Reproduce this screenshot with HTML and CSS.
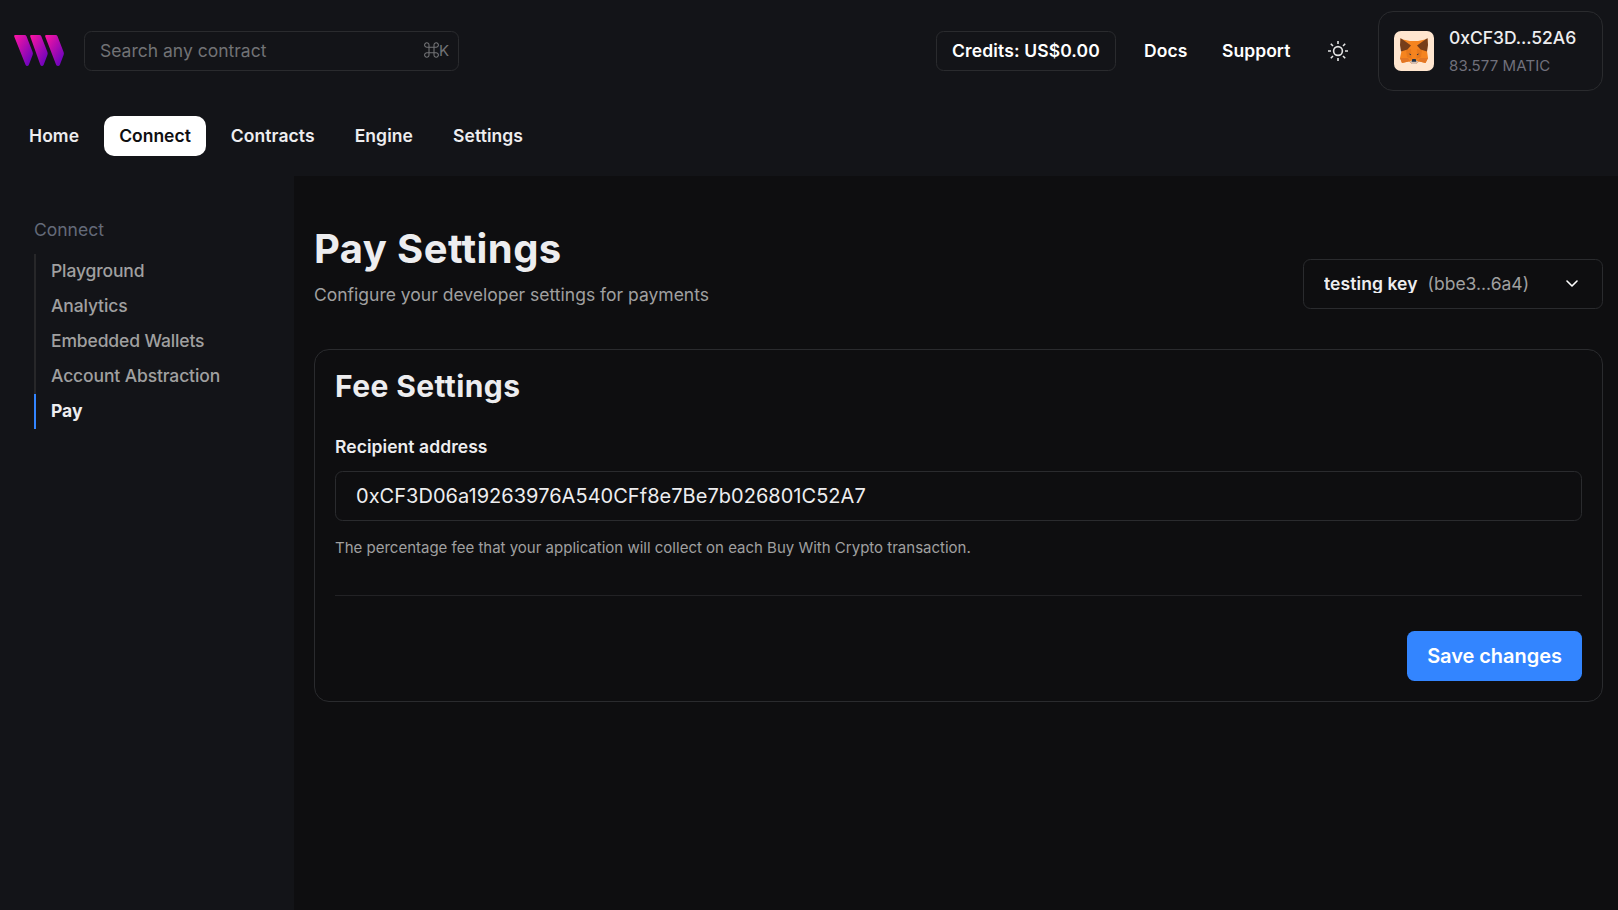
FILE: index.html
```html
<!DOCTYPE html>
<html lang="en">
<head>
<meta charset="utf-8">
<title>Pay Settings</title>
<link rel="stylesheet" href="styles.css">
</head>
<body>
<header class="header">
  <div class="topbar">
    <svg class="logo" width="50" height="31" viewBox="0 0 50 31">
      <defs>
        <linearGradient id="brand" x1="0" y1="0" x2="1" y2="1">
          <stop offset="0.08" stop-color="#f213a4"/><stop offset="0.85" stop-color="#7204bd"/>
        </linearGradient>
      </defs>
      <path fill="url(#brand)" d="M1 0H10.6Q12 0 12.5 1.3L18.6 17.1Q19.2 18.5 18.6 20L14.9 29.8Q14.3 31 13.2 31Q12 31 11.5 29.8L.2 1.6Q-.3 0 1 0Z"/>
      <path fill="url(#brand)" d="M17 0H25.4Q26.8 0 27.3 1.3L33.4 17.1Q34 18.5 33.4 20L29.7 29.8Q29.1 31 28 31Q26.8 31 26.3 29.8L16.2 1.6Q15.7 0 17 0Z"/>
      <path fill="url(#brand)" d="M32 0H41.6Q43 0 43.5 1.3L49.6 17.1Q50.2 18.5 49.6 20L45.9 29.8Q45.3 31 44.2 31Q42.6 31 42.1 29.8L31.2 1.6Q30.7 0 32 0Z"/>
    </svg>
    <div class="search"><span>Search any contract</span><span class="shortcut"><svg width="15" height="16" viewBox="0 0 15 16" fill="none" stroke="currentColor" stroke-width="1.1"><path d="M5 5.2H10V10.8H5ZM5 5.2H3A2.2 2.2 0 1 1 5 3ZM10 5.2V3A2.2 2.2 0 1 1 12 5.2ZM10 10.8H12A2.2 2.2 0 1 1 10 13ZM5 10.8V13A2.2 2.2 0 1 1 3 10.8Z"/></svg>K</span></div>
    <div class="actions">
      <div class="credits">Credits: US$0.00</div>
      <a class="docs">Docs</a>
      <a class="support">Support</a>
      <svg class="sun" width="20" height="20" viewBox="0 0 20 20" fill="none" stroke="#e4e4e4" stroke-width="1.6"><circle cx="10" cy="10" r="4.4"/><path d="M10 0V3M10 17V20M0 10H3M17 10H20M2.8 2.8L5 5M15 15L17.2 17.2M17.2 2.8L15 5M5 15L2.8 17.2"/></svg>
      <div class="account">
        <svg class="avatar" width="40" height="40" viewBox="0 0 40 40">
          <rect width="40" height="40" rx="7" fill="#ffe6cf"/>
          <path fill="#f5841f" d="M6.5 8L16 10H24L33.5 8L33 20L34 27L31.5 32L25 30.5L22 33H18L15 30.5L8 32L6 27L7.5 20Z"/>
          <path fill="#e27625" d="M6 27H14L16 30L8 32ZM34 27H26L24 30L31.5 32Z"/>
          <path fill="#e8791c" d="M12 19L17 18L17.5 28L13 26ZM28 19L23 18L22.5 28L27 26Z"/>
          <path fill="#763e1a" d="M6.5 7L17 14.5L13.5 18.5L7 20.5L6 14ZM33.5 7L23 14.5L26.5 18.5L33 20.5L34 14Z"/>
          <path fill="#d5bfb2" d="M15.5 30.5L18 29.5H22L24.5 30.5L22 33H18Z"/>
          <path fill="#233447" d="M18.3 28H21.7L22.3 30.8H17.7ZM14.7 22.5L17.2 23.2L16.5 24.2ZM25.3 22.5L22.8 23.2L23.5 24.2Z"/>
        </svg>
        <div class="account-text"><div class="address">0xCF3D...52A6</div><div class="balance">83.577 MATIC</div></div>
      </div>
    </div>
  </div>
  <nav class="tabs"><a>Home</a><a class="active">Connect</a><a>Contracts</a><a>Engine</a><a>Settings</a></nav>
</header>
<div class="body">
  <aside class="sidebar">
    <div class="side-title">Connect</div>
    <div class="side-list"><a>Playground</a><a>Analytics</a><a>Embedded Wallets</a><a>Account Abstraction</a><a class="current">Pay</a></div>
  </aside>
  <main class="main">
    <div class="heading">
      <div><h1>Pay Settings</h1><p class="subtitle">Configure your developer settings for payments</p></div>
      <div class="select"><span class="key-name">testing key</span><span class="key-id">(bbe3...6a4)</span><svg class="chevron" width="12" height="8" viewBox="0 0 12 8" fill="none" stroke="#fff" stroke-width="1.6" stroke-linecap="round" stroke-linejoin="round"><path d="M1 1L6 6L11 1"/></svg></div>
    </div>
    <section class="card">
      <h2>Fee Settings</h2>
      <div class="label">Recipient address</div>
      <div class="input">0xCF3D06a19263976A540CFf8e7Be7b026801C52A7</div>
      <p class="help">The percentage fee that your application will collect on each Buy With Crypto transaction.</p>
      <div class="footer"><button class="save">Save changes</button></div>
    </section>
  </main>
</div>
</body>
</html>
```
FILE: styles.css
```css
* { box-sizing: border-box; }
body { margin: 0; height: 910px; display: flex; flex-direction: column; overflow: hidden; background: #0e0e10; color: #ededef; font-family: Inter, sans-serif; font-size: 17.5px; }
h1, h2, p { margin: 0; }
.header { height: 176px; flex: none; background: #131418; }
.topbar { display: flex; align-items: center; height: 102px; padding: 0 15px 0 14px; }
.logo { flex: none; margin: 0 20px 2px 0; overflow: visible; }
.search { width: 375px; height: 40px; border: 1px solid #2a2b2e; border-radius: 7.5px; padding: 0 9px 2px 15px; display: flex; align-items: center; justify-content: space-between; color: #717275; }
.shortcut { display: flex; align-items: center; font-size: 15px; }
.actions { margin-left: auto; display: flex; align-items: center; font-weight: 600; color: #fff; }
.credits { width: 180px; height: 40px; border: 1px solid #2a2b2e; border-radius: 7.5px; padding-bottom: 2px; display: flex; align-items: center; justify-content: center; letter-spacing: 0.13px; white-space: nowrap; }
.docs, .support { padding-bottom: 2px; letter-spacing: 0.05px; }
.docs { margin-left: 28px; width: 78px; }
.support { width: 106px; }
.sun { flex: none; margin-right: 30px; }
.account { width: 225px; height: 80px; border: 1px solid #2a2b2e; border-radius: 15px; padding-left: 15px; display: flex; align-items: center; gap: 15px; }
.account-text { display: flex; flex-direction: column; gap: 4px; padding-bottom: 1px; }
.address { font-weight: 500; line-height: 26px; color: #ededef; letter-spacing: -0.05px; }
.balance { font-weight: 400; font-size: 15px; line-height: 22px; color: #70707b; letter-spacing: 0.1px; }
.tabs { display: flex; gap: 10px; padding: 14px 0 0 14px; font-weight: 600; letter-spacing: 0.08px; }
.tabs a { height: 40px; line-height: 40px; padding: 0 15px; border-radius: 10px; }
.tabs .active { background: #fff; color: #0e0e10; letter-spacing: 0; }
.body { flex: 1; display: flex; }
.sidebar { width: 294px; flex: none; background: #131418; padding: 41px 0 0 34px; }
.side-title { height: 37px; line-height: 26px; color: #646a78; }
.side-list { display: flex; flex-direction: column; }
.side-list a { height: 35px; line-height: 33px; border-left: 2px solid #272729; padding-left: 15px; font-weight: 500; letter-spacing: -0.13px; color: #a0a0a0; }
.side-list .current { border-color: #3385ff; color: #ededef; font-weight: 700; letter-spacing: 0; }
.main { flex: 1; padding: 48px 15px 0 20px; }
.heading { height: 125px; display: flex; justify-content: space-between; }
h1 { font-size: 40px; line-height: 50px; font-weight: 700; letter-spacing: 0.4px; }
.subtitle { margin-top: 8px; line-height: 26px; color: #a0a0a0; }
.select { width: 300px; height: 50px; margin-top: 35px; border: 1px solid #2a2b2e; border-radius: 7.5px; padding: 0 24px 0 20px; display: flex; align-items: center; }
.key-name { font-weight: 600; line-height: 17.5px; overflow: hidden; margin-right: 10px; letter-spacing: 0.08px; }
.key-id { color: #a0a0a0; padding-bottom: 2px; }
.chevron { margin-left: auto; }
.card { height: 353px; border: 1px solid #2a2b2e; border-radius: 15px; padding: 16px 20px 0; }
h2 { font-size: 30px; line-height: 40px; font-weight: 700; letter-spacing: 0.4px; }
.label { margin-top: 28px; line-height: 26px; font-weight: 600; letter-spacing: 0.06px; }
.input { margin-top: 11px; height: 50px; border: 1px solid #2a2b2e; border-radius: 7.5px; padding: 0 20px; font-size: 20px; line-height: 48px; letter-spacing: 0.03px; }
.help { margin-top: 16px; font-size: 15px; line-height: 22px; color: #a0a0a0; }
.footer { margin-top: 36px; border-top: 1px solid #222225; padding-top: 35px; display: flex; justify-content: flex-end; }
.save { width: 175px; height: 50px; border: 0; border-radius: 7.5px; background: #3385ff; color: #fff; font: 600 20px Inter, sans-serif; letter-spacing: -0.05px; padding: 0; }
```
